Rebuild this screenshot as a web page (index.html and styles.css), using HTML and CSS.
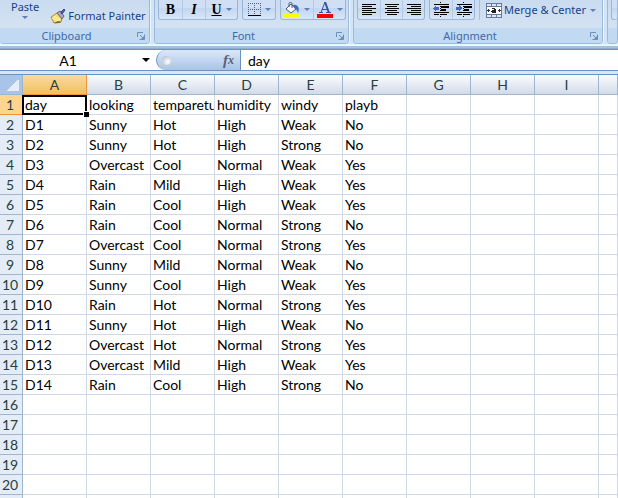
FILE: index.html
```html
<!DOCTYPE html>
<html lang="en">
<head>
<meta charset="utf-8">
<title>Spreadsheet</title>
<link rel="stylesheet" href="styles.css">
</head>
<body>
<div class="app">
<header class="ribbon">
  <section class="group clipboard">
    <div class="tools">
      <button class="paste" type="button">Paste<i class="caret"></i></button>
      <button class="tool painter" type="button">
        <svg width="16" height="16" viewBox="0 0 16 16"><path d="M1 9l6-4 5 5-1 4-5 1H4z" fill="#f5df72" stroke="#a98a35"/><path d="M2 10l7 3M4 8l6 4" stroke="#fff7c0"/><path d="M7 5l3-2 4 5-2 3z" fill="#a9a9bd" stroke="#646480"/><path d="M11 4l3-3 1 1-3 4z" fill="#5b5fa8" stroke="#3a3f7e"/><path d="M4 15l4-2 3 1-1 1z" fill="#806423"/></svg>
        <span>Format Painter</span></button>
    </div>
    <div class="caption"><h2>Clipboard</h2><button class="launcher" type="button" aria-label="Clipboard options"><svg width="8" height="8" viewBox="0 0 8 8"><path d="M.5 5V.5H6" fill="none" stroke="#6c8fb8"/><path d="M3 3l3 3" stroke="#6c8fb8"/><path d="M7.5 2.500v5h-5" fill="none" stroke="#6c8fb8"/><path d="M4 7h3V4z" fill="#6c8fb8"/></svg></button></div>
  </section>
  <section class="group font">
    <div class="tools">
      <div class="set">
        <button class="cell-btn bold" type="button">B</button>
        <button class="cell-btn italic" type="button">I</button>
        <button class="cell-btn wide" type="button"><u>U</u><i class="caret"></i></button>
      </div>
      <div class="set">
        <button class="cell-btn wide" type="button" aria-label="Borders"><svg width="13" height="14" viewBox="0 0 13 14" shape-rendering="crispEdges"><path d="M0 .5h13M0 6.500h13M.5 0v12M6.500 0v12M12.500 0v12" fill="none" stroke="#52647f" stroke-dasharray="1 1"/><path d="M0 12.500h13" stroke="#000" stroke-width="1"/></svg><i class="caret"></i></button>
      </div>
      <div class="set">
        <button class="cell-btn wide" type="button" aria-label="Fill color"><svg width="16" height="16" viewBox="0 0 16 16"><path d="M2 7l5-5 5 5-5 4z" fill="#f6f8fc" stroke="#4a5b78"/><path d="M5 5V1.500C5 0 8 0 8 1.500V6" fill="none" stroke="#4a5b78"/><path d="M9 3c5-1 7 3 5 8-1-3-2-4-4-5z" fill="#3c6fc0"/><path d="M0 12h16v4H0z" fill="#ff0"/></svg><i class="caret"></i></button>
        <button class="cell-btn wide" type="button" aria-label="Font color"><svg width="16" height="16" viewBox="0 0 16 16"><path d="M4 10.500L8 0l1 1M5 7.500h6M2 10.500h4M9 10.500h5" fill="none" stroke="#33549b" stroke-width="1"/><path d="M8 0l4 11" stroke="#33549b" stroke-width="2"/><path d="M0 12h16v4H0z" fill="#f00"/></svg><i class="caret"></i></button>
      </div>
    </div>
    <div class="caption"><h2>Font</h2><button class="launcher" type="button" aria-label="Font options"><svg width="8" height="8" viewBox="0 0 8 8"><path d="M.5 5V.5H6" fill="none" stroke="#6c8fb8"/><path d="M3 3l3 3" stroke="#6c8fb8"/><path d="M7.5 2.500v5h-5" fill="none" stroke="#6c8fb8"/><path d="M4 7h3V4z" fill="#6c8fb8"/></svg></button></div>
  </section>
  <section class="group alignment">
    <div class="tools">
      <div class="set">
        <button class="cell-btn" type="button" aria-label="Align left"><svg width="14" height="12" viewBox="0 0 14 12" shape-rendering="crispEdges"><path d="M0 .5h14M0 2.500h10M0 4.500h14M0 6.500h10M0 8.500h14M0 10.500h10" stroke="#000"/></svg></button>
        <button class="cell-btn" type="button" aria-label="Center"><svg width="14" height="12" viewBox="0 0 14 12" shape-rendering="crispEdges"><path d="M0 .5h14M2 2.500h10M0 4.500h14M2 6.500h10M0 8.500h14M2 10.500h10" stroke="#000"/></svg></button>
        <button class="cell-btn" type="button" aria-label="Align right"><svg width="14" height="12" viewBox="0 0 14 12" shape-rendering="crispEdges"><path d="M0 .5h14M4 2.500h10M0 4.500h14M4 6.500h10M0 8.500h14M4 10.500h10" stroke="#000"/></svg></button>
      </div>
      <div class="set">
        <button class="cell-btn" type="button" aria-label="Decrease indent"><svg width="16" height="15" viewBox="0 0 16 15" shape-rendering="crispEdges"><path d="M1 2.500h15M1 10.500h15M1 12.500h5M8 12.500h6" stroke="#000"/><path d="M8 4h8v2H8zM8 7h5v2H8z"/><path d="M7.500 0v15" stroke="#000" stroke-dasharray="1 1"/><path d="M0 6l3-3v2h3v3H3v2z" fill="#3f69c4"/></svg></button>
        <button class="cell-btn" type="button" aria-label="Increase indent"><svg width="16" height="15" viewBox="0 0 16 15" shape-rendering="crispEdges"><path d="M1 2.500h15M1 10.500h15M1 12.500h5M8 12.500h6" stroke="#000"/><path d="M8 4h8v2H8zM8 7h5v2H8z"/><path d="M7.500 0v15" stroke="#000" stroke-dasharray="1 1"/><path d="M6 6L3 3v2H0v3h3v2z" fill="#3f69c4"/></svg></button>
      </div>
      <button class="tool merge" type="button">
        <svg width="16" height="15" viewBox="0 0 16 15" shape-rendering="crispEdges"><path d="M.5.500h15v14H.5z" fill="#dce6f5" stroke="#667b9e"/><path d="M0 3.500h16M0 11.500h16M5.500 0v4M10.500 0v4M5.500 11v4M10.500 11v4" stroke="#667b9e"/><path d="M1 4h14v7H1z" fill="#fff"/><path d="M1 7h3v1H1zM2 6h1v3H2zM12 7h3v1h-3zM13 6h1v3h-1z" fill="#234"/><path d="M6 5h3v1h1v4H6V9H5V8h1V7h2V6H6z" fill="#222"/></svg>
        <span>Merge &amp; Center</span><i class="caret"></i></button>
    </div>
    <div class="caption"><h2>Alignment</h2><button class="launcher" type="button" aria-label="Alignment options"><svg width="8" height="8" viewBox="0 0 8 8"><path d="M.5 5V.5H6" fill="none" stroke="#6c8fb8"/><path d="M3 3l3 3" stroke="#6c8fb8"/><path d="M7.5 2.500v5h-5" fill="none" stroke="#6c8fb8"/><path d="M4 7h3V4z" fill="#6c8fb8"/></svg></button></div>
  </section>
  <section class="group number">
    <div class="tools"><div class="set"></div></div>
    <div class="caption"></div>
  </section>
</header>

<div class="formula-bar">
  <input class="name-box" type="text" value="A1" aria-label="Name box">
  <button class="name-drop" type="button" aria-label="Named ranges"><i class="caret"></i></button>
  <div class="fx"><span class="knob"></span><button class="fx-btn" type="button"><span>f</span><small>x</small></button></div>
  <input class="formula" type="text" value="day" aria-label="Formula">
</div>

<main class="sheet">
<table>
  <colgroup><col class="c-head"><col span="9" class="c-data"><col></colgroup>
  <thead><tr><th class="corner"></th><th class="on">A</th><th>B</th><th>C</th><th>D</th><th>E</th><th>F</th><th>G</th><th>H</th><th>I</th><th></th></tr></thead>
  <tbody>
  <tr><th class="on">1</th><td class="active">day</td><td>looking</td><td>temparetur</td><td>humidity</td><td>windy</td><td>playb</td><td></td><td></td><td></td><td></td></tr>
  <tr><th>2</th><td>D1</td><td>Sunny</td><td>Hot</td><td>High</td><td>Weak</td><td>No</td><td></td><td></td><td></td><td></td></tr>
  <tr><th>3</th><td>D2</td><td>Sunny</td><td>Hot</td><td>High</td><td>Strong</td><td>No</td><td></td><td></td><td></td><td></td></tr>
  <tr><th>4</th><td>D3</td><td>Overcast</td><td>Cool</td><td>Normal</td><td>Weak</td><td>Yes</td><td></td><td></td><td></td><td></td></tr>
  <tr><th>5</th><td>D4</td><td>Rain</td><td>Mild</td><td>High</td><td>Weak</td><td>Yes</td><td></td><td></td><td></td><td></td></tr>
  <tr><th>6</th><td>D5</td><td>Rain</td><td>Cool</td><td>High</td><td>Weak</td><td>Yes</td><td></td><td></td><td></td><td></td></tr>
  <tr><th>7</th><td>D6</td><td>Rain</td><td>Cool</td><td>Normal</td><td>Strong</td><td>No</td><td></td><td></td><td></td><td></td></tr>
  <tr><th>8</th><td>D7</td><td>Overcast</td><td>Cool</td><td>Normal</td><td>Strong</td><td>Yes</td><td></td><td></td><td></td><td></td></tr>
  <tr><th>9</th><td>D8</td><td>Sunny</td><td>Mild</td><td>Normal</td><td>Weak</td><td>No</td><td></td><td></td><td></td><td></td></tr>
  <tr><th>10</th><td>D9</td><td>Sunny</td><td>Cool</td><td>High</td><td>Weak</td><td>Yes</td><td></td><td></td><td></td><td></td></tr>
  <tr><th>11</th><td>D10</td><td>Rain</td><td>Hot</td><td>Normal</td><td>Strong</td><td>Yes</td><td></td><td></td><td></td><td></td></tr>
  <tr><th>12</th><td>D11</td><td>Sunny</td><td>Hot</td><td>High</td><td>Weak</td><td>No</td><td></td><td></td><td></td><td></td></tr>
  <tr><th>13</th><td>D12</td><td>Overcast</td><td>Hot</td><td>Normal</td><td>Strong</td><td>Yes</td><td></td><td></td><td></td><td></td></tr>
  <tr><th>14</th><td>D13</td><td>Overcast</td><td>Mild</td><td>High</td><td>Weak</td><td>Yes</td><td></td><td></td><td></td><td></td></tr>
  <tr><th>15</th><td>D14</td><td>Rain</td><td>Cool</td><td>High</td><td>Strong</td><td>No</td><td></td><td></td><td></td><td></td></tr>
  <tr><th>16</th><td></td><td></td><td></td><td></td><td></td><td></td><td></td><td></td><td></td><td></td></tr>
  <tr><th>17</th><td></td><td></td><td></td><td></td><td></td><td></td><td></td><td></td><td></td><td></td></tr>
  <tr><th>18</th><td></td><td></td><td></td><td></td><td></td><td></td><td></td><td></td><td></td><td></td></tr>
  <tr><th>19</th><td></td><td></td><td></td><td></td><td></td><td></td><td></td><td></td><td></td><td></td></tr>
  <tr><th>20</th><td></td><td></td><td></td><td></td><td></td><td></td><td></td><td></td><td></td><td></td></tr>
  <tr><th></th><td></td><td></td><td></td><td></td><td></td><td></td><td></td><td></td><td></td><td></td></tr>
  </tbody>
</table>
</main>
</div>
</body>
</html>
```
FILE: styles.css
```css
* { box-sizing: border-box; }
body { margin: 0; background: #fff; color: #000; font-family: Lato, "Liberation Sans", sans-serif; font-size: 14px; }
button { display: flex; align-items: center; margin: 0; padding: 0; border: 0; background: none; color: #15428b; font-family: "Noto Sans", sans-serif; font-size: 11px; line-height: 16px; }
svg { display: block; flex: none; }
input { min-width: 0; padding: 0; border: 0; outline: 0; background: #fff; color: #000; font-family: Lato, sans-serif; font-size: 14px; }
.app { height: 100vh; overflow: hidden; }

/* Ribbon */
.ribbon { display: flex; gap: 4px; height: 49px; padding-bottom: 5px; overflow: hidden; background: linear-gradient(#d3e4f6 0 44px, #e0fafd 44px 46px, #a9bfdd 46px 48px, #93add0 48px); }
.group { display: flex; flex-direction: column; flex: none; border: 1px solid #9bbbdc; border-top: 0; border-radius: 0 0 4px 4px; background: linear-gradient(#c9dbef, #dae7f5); overflow: hidden; box-shadow: 1px 0 #eaf5fd; }
.clipboard { width: 150px; border-left: 0; }
.font { width: 195px; }
.alignment { width: 250px; }
.number { flex: 1; }
.tools { display: flex; flex: none; align-items: flex-start; gap: 4px; height: 28px; padding: 0 3px; white-space: nowrap; }
.caption { display: flex; flex: 1; align-items: center; padding-right: 4px; background: #c1d9f1; }
.caption h2 { flex: 1; margin: 0; padding-right: 4px; color: #3e6aaa; font: 400 11px/15px "Noto Sans", sans-serif; text-align: center; }
.caret { flex: none; width: 0; height: 0; border: 3px solid transparent; border-top-color: #5b80b5; border-bottom: 0; }
.paste { flex-direction: column; gap: 3px; padding: 0 7px 0 8px; line-height: 13px; }
.tool { gap: 2px; }
.painter { padding: 8px 0 0; }
.set { display: flex; height: 20px; border: 1px solid #9ab5da; border-top: 0; border-radius: 0 0 3px 3px; background: linear-gradient(#d0dff4 0 8px, #c3d6f0 8px, #d7e6f8); }
.cell-btn { justify-content: center; gap: 4px; width: 23px; height: 19px; color: #000; font: 700 14px/18px "Liberation Serif", serif; }
.cell-btn.wide { width: 32px; }
.alignment .cell-btn { width: 22px; }
.cell-btn + .cell-btn { border-left: 1px solid #b2c9e8; }
.italic { font-style: italic; }
.merge { height: 20px; padding-left: 6px; border-left: 1px solid #a9bfdb; }
.merge .caret { margin-left: 2px; }
.number .tools { padding: 0 0 0 3px; }
.number .set { flex: 1; border-right: 0; }

/* Formula bar */
.formula-bar { display: flex; height: 26px; padding-bottom: 3px; border-top: 1px solid #6b93bf; border-bottom: 1px solid #6b93bf; background: linear-gradient(#fff 0 20px, #6b93bf 20px 21px, #d9e5f5 21px); }
.name-box { width: 136px; height: 20px; text-align: center; }
.name-drop { justify-content: center; width: 20px; height: 20px; }
.name-drop .caret { border-width: 4px; border-bottom: 0; border-top-color: #000; }
.fx { display: flex; align-items: center; justify-content: space-between; width: 85px; height: 20px; padding: 0 6px 0 5px; border-left: 1px solid #6b93bf; border-right: 1px solid #6b93bf; border-radius: 10px 0 0 10px; background: linear-gradient(#dce8f7, #a8c4e8); }
.knob { width: 9px; height: 9px; border-radius: 50%; background: radial-gradient(circle at 65% 65%, #fff, #a9b5c6); }
.fx-btn { color: #5a6275; font: italic 700 15px/18px "Liberation Serif", serif; }
.fx-btn small { font-size: 12px; }
.formula { flex: 1; height: 20px; padding-left: 7px; }

/* Sheet */
table { width: 100%; table-layout: fixed; border-collapse: separate; border-spacing: 0; }
.c-head { width: 23px; }
.c-data { width: 64px; }
th, td { height: 20px; padding: 0 0 0 2px; border: solid #d0d7e5; border-width: 0 1px 1px 0; overflow: hidden; font-weight: 400; line-height: 19px; text-align: left; white-space: nowrap; }
th { padding: 0; border-color: #9eb6ce; color: #27413e; text-align: center; background: #e4ecf7; }
thead th { background: linear-gradient(#f9fcfd, #d3dbe9); }
tbody th { padding-right: 2px; }
thead .on { border-color: #f29536; background: linear-gradient(#f9d99f, #f1c15f); }
tbody .on { border-color: #f29536; background: #ffd58d; }
thead .corner { background: linear-gradient(135deg, transparent 50%, #e4edf8 50%) 6px 5px / 13px 11px no-repeat, #a9c4e9; }
.active { position: relative; overflow: visible; }
.active::before { content: ""; position: absolute; inset: 0 -1px -1px -1px; border: 2px solid #000; }
.active::after { content: ""; position: absolute; right: -3px; bottom: -3px; width: 5px; height: 5px; border: solid #fff; border-width: 1px 0 0 1px; background: #000; }
```
